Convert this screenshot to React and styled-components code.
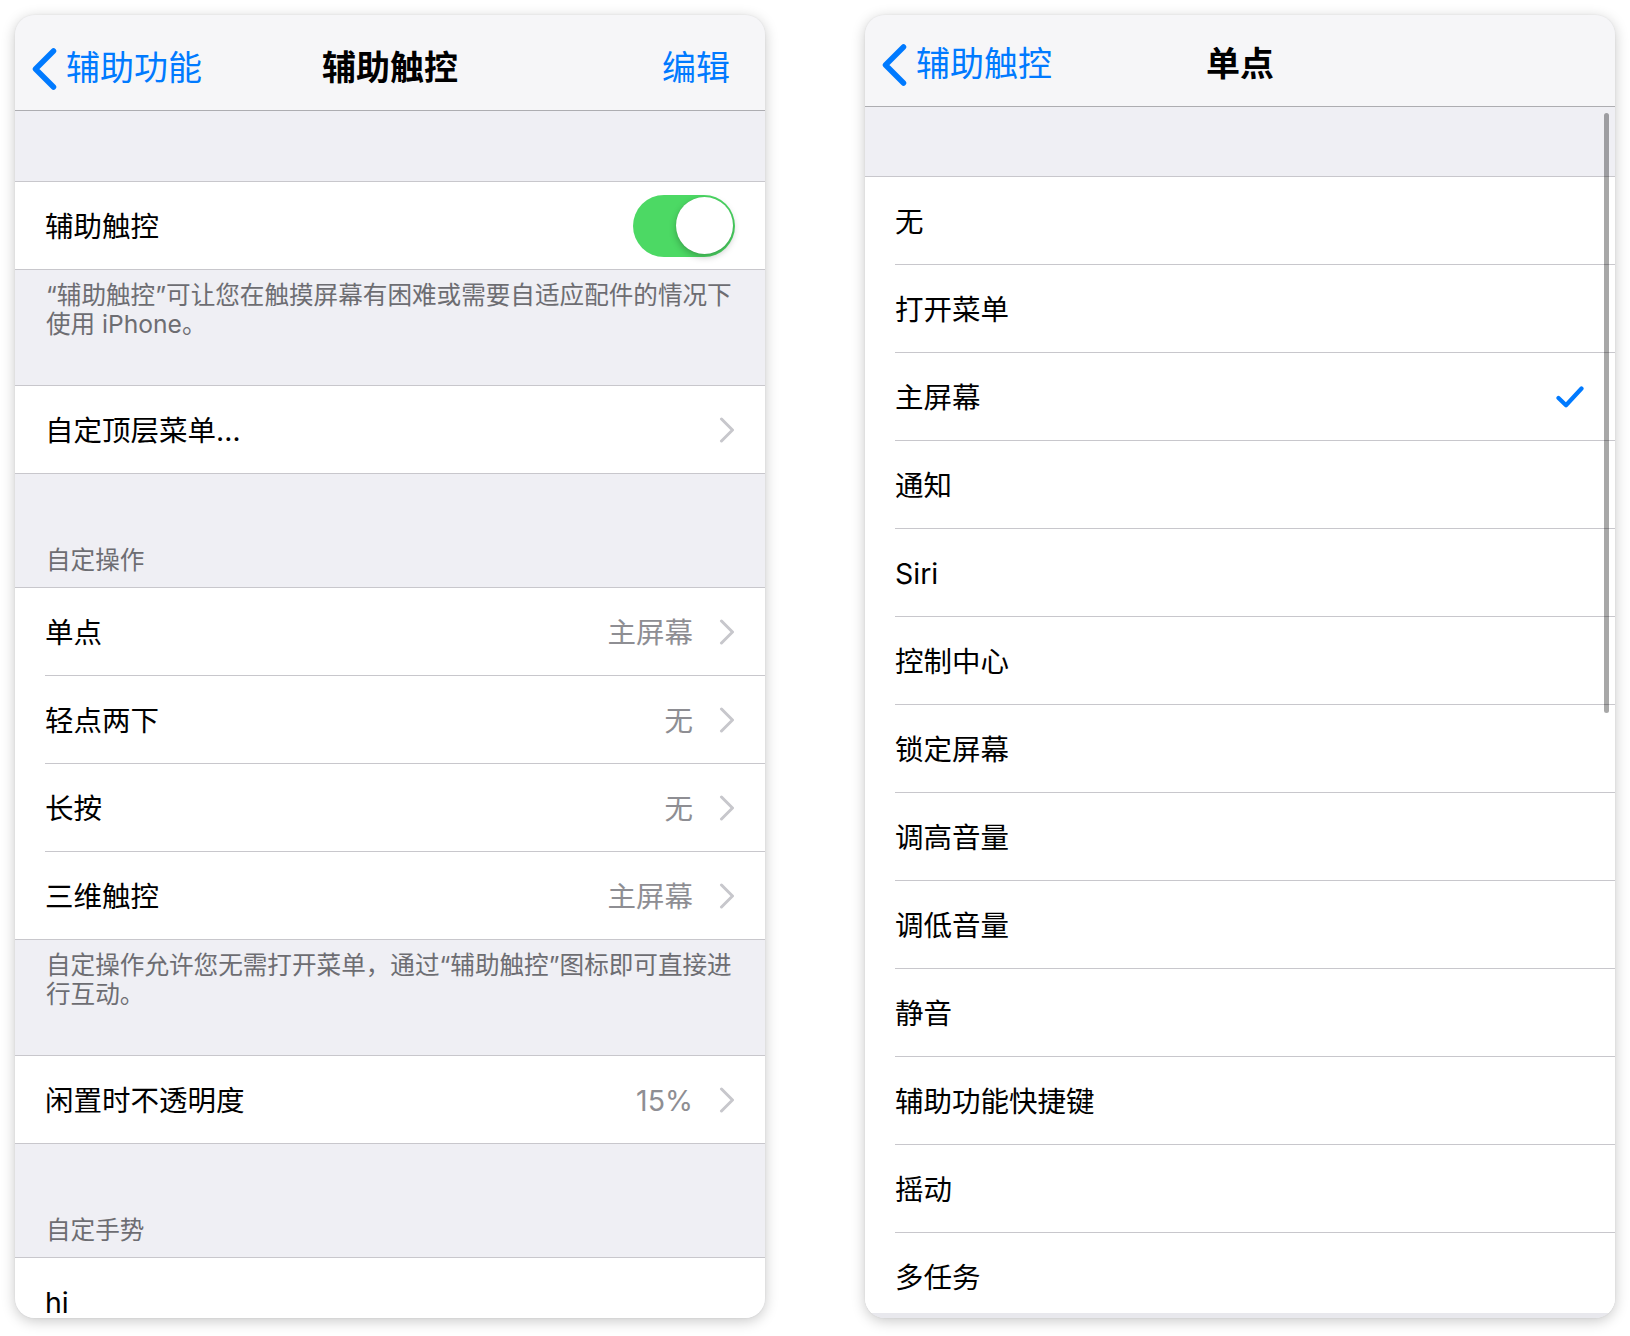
import React from "react";
import styled, { createGlobalStyle } from "styled-components";

const GlobalStyle = createGlobalStyle`
  html, body { margin: 0; padding: 0; background: #ffffff; }
  body {
    font-family: "Inter", "Noto Sans CJK SC", sans-serif;
    -webkit-font-smoothing: antialiased;
  }
`;

const BLUE = "#007aff";
const SEP = "#c8c7cc";

const Page = styled.div`
  display: flex;
  align-items: flex-start;
  gap: 100px;
  padding: 15px 0 0 15px;
  width: 1630px;
  height: 1336px;
  box-sizing: border-box;
  background: #ffffff;
`;

const Phone = styled.section`
  position: relative;
  width: 750px;
  height: 1303px;
  border-radius: 20px;
  overflow: hidden;
  background: #efeff4;
  box-shadow: 0 3px 14px rgba(0, 0, 0, 0.22), 0 0 2px rgba(0, 0, 0, 0.08);
  display: flex;
  flex-direction: column;
`;

const NavBar = styled.header`
  flex: none;
  height: ${(p) => p.$h}px;
  box-sizing: border-box;
  padding-top: ${(p) => p.$shift}px;
  background: #f6f6f8;
  border-bottom: 1px solid #adadb1;
  display: grid;
  grid-template-columns: 1fr auto 1fr;
  align-items: center;
  line-height: 1.2;
`;

const BackButton = styled.div`
  display: flex;
  align-items: center;
  gap: 9px;
  padding-left: 17px;
  color: ${BLUE};
  font-size: 34px;
`;

const NavTitle = styled.div`
  font-size: 34px;
  font-weight: 600;
  color: #000;
`;

const NavAction = styled.div`
  justify-self: end;
  padding-right: 35px;
  color: ${BLUE};
  font-size: 34px;
`;

const Spacer = styled.div`
  flex: none;
  height: ${(p) => p.$h}px;
`;

const Group = styled.ul`
  flex: ${(p) => (p.$fill ? "1" : "none")};
  margin: 0;
  padding: 0;
  background: #ffffff;
  border-top: 1px solid ${SEP};
  border-bottom: ${(p) => (p.$open ? "none" : `1px solid ${SEP}`)};
  overflow: hidden;
`;

const CellBody = styled.div`
  height: 87px;
  display: flex;
  align-items: center;
  padding-right: ${(p) => p.$pr || 30}px;
`;

const Cell = styled.li`
  list-style: none;
  padding-left: 30px;
  background: #ffffff;
  &:not(:last-child) > ${CellBody} {
    border-bottom: 1px solid ${SEP};
  }
`;

const Label = styled.span`
  flex: 1;
  padding-top: 4px;
  font-size: 28.5px;
  line-height: 1.2;
  color: #000;
`;

const Value = styled.span`
  padding-top: 4px;
  font-size: 28.5px;
  line-height: 1.2;
  color: #8e8e93;
  margin-right: 26px;
`;

const Footer = styled.div`
  flex: none;
  height: 115px;
  box-sizing: border-box;
  padding: 11px 27px 0 31px;
  font-size: 24.6px;
  line-height: 29px;
  color: #6d6d72;
`;

const SectionHeader = styled.div`
  flex: none;
  height: 113px;
  box-sizing: border-box;
  display: flex;
  align-items: flex-end;
  padding: 0 31px 12px;
  font-size: 24.6px;
  line-height: 29px;
  color: #6d6d72;
`;

const Switch = styled.div`
  width: 102px;
  height: 62px;
  border-radius: 31px;
  background: #4cd964;
  display: flex;
  align-items: center;
  justify-content: flex-end;
  padding: 0 2px;
  box-sizing: border-box;
`;

const Knob = styled.div`
  width: 57px;
  height: 57px;
  border-radius: 50%;
  background: #ffffff;
  box-shadow: 0 3px 7px rgba(0, 0, 0, 0.25), 0 0 1px rgba(0, 0, 0, 0.15);
`;

const ScrollIndicator = styled.div`
  position: absolute;
  top: 98px;
  right: 6px;
  width: 5px;
  height: 600px;
  border-radius: 3px;
  background: rgba(0, 0, 0, 0.34);
`;

const BottomStrip = styled.div`
  flex: none;
  height: 5px;
  background: #e8e8ed;
`;

const BackChevron = () => (
  <svg width="25" height="42" viewBox="0 0 25 42" aria-hidden="true">
    <path
      d="M21.5 3 L3.5 21 L21.5 39"
      fill="none"
      stroke={BLUE}
      strokeWidth="5.5"
      strokeLinecap="round"
      strokeLinejoin="round"
    />
  </svg>
);

const Disclosure = () => (
  <svg width="16" height="26" viewBox="0 0 16 26" aria-hidden="true">
    <path
      d="M2.5 2 L13.5 13 L2.5 24"
      fill="none"
      stroke="#c7c7cc"
      strokeWidth="3"
      strokeLinecap="round"
      strokeLinejoin="round"
    />
  </svg>
);

const Check = () => (
  <svg width="28" height="22" viewBox="0 0 28 22" aria-hidden="true">
    <path
      d="M2.5 12 L10 19.2 L25.5 2.5"
      fill="none"
      stroke={BLUE}
      strokeWidth="4.2"
      strokeLinecap="round"
      strokeLinejoin="round"
    />
  </svg>
);

const LinkCell = ({ label, value }) => (
  <Cell>
    <CellBody>
      <Label>{label}</Label>
      {value && <Value>{value}</Value>}
      <Disclosure />
    </CellBody>
  </Cell>
);

const actions = [
  ["单点", "主屏幕"],
  ["轻点两下", "无"],
  ["长按", "无"],
  ["三维触控", "主屏幕"],
];

const options = [
  "无",
  "打开菜单",
  "主屏幕",
  "通知",
  "Siri",
  "控制中心",
  "锁定屏幕",
  "调高音量",
  "调低音量",
  "静音",
  "辅助功能快捷键",
  "摇动",
  "多任务",
];

const SELECTED = "主屏幕";

export default function App() {
  return (
    <>
      <GlobalStyle />
      <Page>
        <Phone>
          <NavBar $h={96} $shift={12}>
            <BackButton>
              <BackChevron />
              <span>辅助功能</span>
            </BackButton>
            <NavTitle>辅助触控</NavTitle>
            <NavAction>编辑</NavAction>
          </NavBar>
          <Spacer $h={70} />
          <Group>
            <Cell>
              <CellBody>
                <Label>辅助触控</Label>
                <Switch>
                  <Knob />
                </Switch>
              </CellBody>
            </Cell>
          </Group>
          <Footer>“辅助触控”可让您在触摸屏幕有困难或需要自适应配件的情况下使用 iPhone。</Footer>
          <Group>
            <LinkCell label="自定顶层菜单…" />
          </Group>
          <SectionHeader>自定操作</SectionHeader>
          <Group>
            {actions.map(([l, v]) => (
              <LinkCell key={l} label={l} value={v} />
            ))}
          </Group>
          <Footer>自定操作允许您无需打开菜单，通过“辅助触控”图标即可直接进行互动。</Footer>
          <Group>
            <LinkCell label="闲置时不透明度" value="15%" />
          </Group>
          <SectionHeader>自定手势</SectionHeader>
          <Group $fill $open>
            <Cell>
              <CellBody>
                <Label>hi</Label>
              </CellBody>
            </Cell>
          </Group>
        </Phone>

        <Phone>
          <NavBar $h={92} $shift={8}>
            <BackButton>
              <BackChevron />
              <span>辅助触控</span>
            </BackButton>
            <NavTitle>单点</NavTitle>
            <div />
          </NavBar>
          <Spacer $h={69} />
          <Group $fill $open>
            {options.map((o) => (
              <Cell key={o}>
                <CellBody $pr={31}>
                  <Label>{o}</Label>
                  {o === SELECTED && <Check />}
                </CellBody>
              </Cell>
            ))}
          </Group>
          <BottomStrip />
          <ScrollIndicator />
        </Phone>
      </Page>
    </>
  );
}
